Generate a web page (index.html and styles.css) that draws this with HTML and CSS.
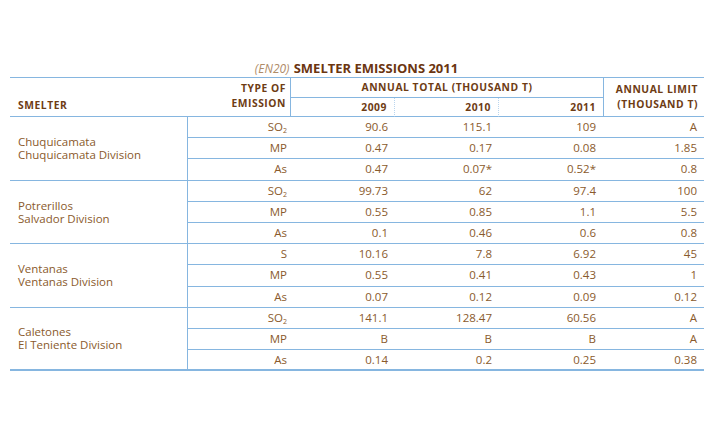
FILE: index.html
```html
<!DOCTYPE html>
<html>
<head>
<meta charset="utf-8">
<link rel="stylesheet" href="styles.css">
</head>
<body>
<div class="page">
  <div class="title"><span class="code">(EN20)</span> <span class="name">SMELTER EMISSIONS 2011</span></div>
  <table class="grid">
    <colgroup>
      <col class="c-smelter"><col class="c-type"><col class="c-y"><col class="c-y"><col class="c-y"><col class="c-limit">
    </colgroup>
    <thead>
      <tr class="h1">
        <th class="th-smelter" rowspan="2">SMELTER</th>
        <th class="th-type" rowspan="2">TYPE OF<br>EMISSION</th>
        <th class="th-total" colspan="3">ANNUAL TOTAL (THOUSAND T)</th>
        <th class="th-limit" rowspan="2">ANNUAL LIMIT<br>(THOUSAND T)</th>
      </tr>
      <tr class="h2">
        <th class="th-year dot">2009</th>
        <th class="th-year dot">2010</th>
        <th class="th-year">2011</th>
      </tr>
    </thead>
    <tbody>
      <tr class="r">
        <td class="smelter" rowspan="3"><div class="nm">Chuquicamata</div><div class="nm">Chuquicamata Division</div></td>
        <td>SO<sub>2</sub></td><td>90.6</td><td>115.1</td><td>109</td><td>A</td>
      </tr>
      <tr class="r"><td>MP</td><td>0.47</td><td>0.17</td><td>0.08</td><td>1.85</td></tr>
      <tr class="r end"><td>As</td><td>0.47</td><td>0.07*</td><td>0.52*</td><td>0.8</td></tr>

      <tr class="r">
        <td class="smelter" rowspan="3"><div class="nm">Potrerillos</div><div class="nm">Salvador Division</div></td>
        <td>SO<sub>2</sub></td><td>99.73</td><td>62</td><td>97.4</td><td>100</td>
      </tr>
      <tr class="r"><td>MP</td><td>0.55</td><td>0.85</td><td>1.1</td><td>5.5</td></tr>
      <tr class="r end"><td>As</td><td>0.1</td><td>0.46</td><td>0.6</td><td>0.8</td></tr>

      <tr class="r">
        <td class="smelter" rowspan="3"><div class="nm">Ventanas</div><div class="nm">Ventanas Division</div></td>
        <td>S</td><td>10.16</td><td>7.8</td><td>6.92</td><td>45</td>
      </tr>
      <tr class="r"><td>MP</td><td>0.55</td><td>0.41</td><td>0.43</td><td>1</td></tr>
      <tr class="r end"><td>As</td><td>0.07</td><td>0.12</td><td>0.09</td><td>0.12</td></tr>

      <tr class="r">
        <td class="smelter last" rowspan="3"><div class="nm">Caletones</div><div class="nm">El Teniente Division</div></td>
        <td>SO<sub>2</sub></td><td>141.1</td><td>128.47</td><td>60.56</td><td>A</td>
      </tr>
      <tr class="r"><td>MP</td><td>B</td><td>B</td><td>B</td><td>A</td></tr>
      <tr class="r final"><td>As</td><td>0.14</td><td>0.2</td><td>0.25</td><td>0.38</td></tr>
    </tbody>
  </table>
</div>
</body>
</html>
```

FILE: styles.css
```css
html, body {
  margin: 0;
  padding: 0;
  background: #ffffff;
}

.page {
  padding: 58px 16px 0 10px;
  width: 693px;
  font-family: "Open Sans", "DejaVu Sans", sans-serif;
}

.title {
  text-align: center;
  height: 19px;
  line-height: 18px;
  white-space: nowrap;
}

.title .code {
  font-style: italic;
  font-size: 12px;
  color: #b08c68;
}

.title .name {
  font-weight: 700;
  font-size: 13px;
  color: #6b3510;
}

.grid {
  width: 693px;
  table-layout: fixed;
  border-collapse: separate;
  border-spacing: 0;
}

.c-smelter { width: 178px; }
.c-type { width: 103px; }
.c-y { width: 104px; }
.c-limit { width: 101px; }

.grid th {
  font-weight: 700;
  font-size: 10.3px;
  letter-spacing: 0.55px;
  color: #6e3c14;
  padding: 0;
  line-height: 15px;
}

.h1 th {
  border-top: 1px solid #86b6e0;
  height: 19px;
}

.h2 th {
  height: 18px;
}

.th-smelter {
  text-align: left;
  vertical-align: bottom;
  padding-left: 8px !important;
  padding-bottom: 3px !important;
  border-bottom: 1px solid #86b6e0;
}

.th-type {
  text-align: right;
  vertical-align: top;
  padding-top: 3px !important;
  padding-right: 4px !important;
  border-right: 1px solid #86b6e0;
  border-bottom: 1px solid #86b6e0;
}

.th-total {
  text-align: center;
  vertical-align: middle;
  border-bottom: 1px solid #86b6e0;
}

.th-limit {
  text-align: right;
  vertical-align: top;
  padding-top: 4px !important;
  padding-right: 6px !important;
  border-left: 1px solid #86b6e0;
  border-bottom: 1px solid #86b6e0;
}

.th-year {
  text-align: right;
  vertical-align: middle;
  padding-right: 7px !important;
  border-bottom: 1px solid #86b6e0;
}

.th-year.dot {
  border-right: 1px dotted #b9d5ee;
}

.grid td {
  font-size: 11.5px;
  color: #8a5a2c;
  text-align: right;
  padding: 0 7px 0 0;
  line-height: 14px;
  vertical-align: middle;
  border-bottom: 1px solid #86b6e0;
  white-space: nowrap;
}

.r {
  height: 21.2px;
}

.grid td:first-child:not(.smelter),
.grid td.smelter + td {
  padding-right: 4px;
}

.grid td.smelter {
  text-align: left;
  padding: 0 0 0 8px;
  border-right: 1px solid #86b6e0;
}

.nm {
  height: 13px;
  line-height: 13px;
  overflow: visible;
}

.grid td.smelter.last {
  border-bottom: 2px solid #86b6e0;
}

.final td {
  border-bottom: 2px solid #86b6e0;
}

.grid sub {
  font-size: 7px;
  line-height: 0;
  vertical-align: -2px;
}
```
